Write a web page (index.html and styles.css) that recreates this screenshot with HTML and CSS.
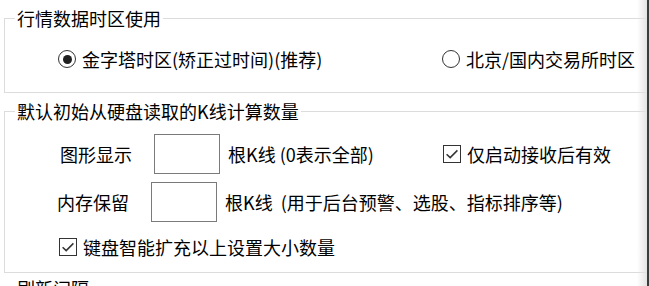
FILE: index.html
```html
<!DOCTYPE html>
<html lang="zh-CN">
<head>
<meta charset="utf-8">
<title>行情数据设置</title>
<link rel="stylesheet" href="styles.css">
</head>
<body>
<div class="window">
  <div class="content">
    <fieldset class="group group-tz">
      <legend>行情数据时区使用</legend>
      <div class="radio-row">
        <label class="opt"><span class="radio checked"><span class="dot"></span></span><span>金字塔时区(矫正过时间)(推荐)</span></label>
        <label class="opt"><span class="radio"></span><span>北京/国内交易所时区</span></label>
      </div>
    </fieldset>

    <fieldset class="group group-k">
      <legend>默认初始从硬盘读取的K线计算数量</legend>
      <div class="row row-a">
        <span class="lbl">图形显示</span>
        <span class="input"></span>
        <span class="hint hint-a">根K线 (0表示全部)</span>
        <label class="opt"><span class="check"><svg viewBox="0 0 18 18" width="18" height="18"><path d="M3.6 9.2 L7.2 12.6 L14.4 5.4" fill="none" stroke="#333" stroke-width="1.5"/></svg></span><span>仅启动接收后有效</span></label>
      </div>
      <div class="row row-b">
        <span class="lbl">内存保留</span>
        <span class="input"></span>
        <span class="hint hint-b">根K线  (用于后台预警、选股、指标排序等)</span>
      </div>
      <div class="row row-c">
        <label class="opt"><span class="check"><svg viewBox="0 0 18 18" width="18" height="18"><path d="M3.6 9.2 L7.2 12.6 L14.4 5.4" fill="none" stroke="#333" stroke-width="1.5"/></svg></span><span>键盘智能扩充以上设置大小数量</span></label>
      </div>
    </fieldset>

    <fieldset class="group group-refresh">
      <legend>刷新间隔</legend>
      <div class="spacer"></div>
    </fieldset>
  </div>
  <div class="edge"></div>
</div>
</body>
</html>
```

FILE: styles.css
```css
html, body {
  margin: 0;
  padding: 0;
  background: #ffffff;
}

body {
  font-family: "Noto Sans CJK SC", "Noto Sans", sans-serif;
  font-size: 18px;
  color: #000000;
}

.window {
  display: flex;
  width: 649px;
  height: 286px;
  overflow: hidden;
}

.content {
  position: relative;
  width: 647px;
  height: 286px;
  overflow: hidden;
  padding-top: 8px;
  box-sizing: border-box;
}

.content::after {
  content: "";
  position: absolute;
  top: 0;
  right: 0;
  width: 10px;
  height: 100%;
  background: linear-gradient(to right, rgba(238, 238, 238, 0), rgba(226, 226, 226, 0.95));
}

.edge {
  width: 2px;
  background: #3c3c3c;
}

.group {
  border: 1px solid #dcdcdc;
  margin: 0 -20px 0 4px;
  padding: 0;
  min-width: 0;
}

.group legend {
  margin-left: 10px;
  padding: 0 2px;
  line-height: 20px;
  font-size: 18px;
}

.group-tz {
  margin-bottom: 8px;
}

.group-k {
  margin-bottom: 5px;
}

.radio-row {
  display: grid;
  grid-template-columns: 384px auto;
  padding: 19px 0 21px 53px;
  line-height: 24px;
}

.opt {
  display: flex;
  align-items: center;
  gap: 6px;
  line-height: 24px;
  white-space: nowrap;
}

.radio {
  width: 18px;
  height: 18px;
  box-sizing: border-box;
  border: 1.5px solid #333333;
  border-radius: 50%;
  display: flex;
  align-items: center;
  justify-content: center;
  flex: none;
}

.radio .dot {
  width: 9px;
  height: 9px;
  border-radius: 50%;
  background: #1f1f1f;
}

.check {
  width: 18px;
  height: 18px;
  box-sizing: border-box;
  border: 1px solid #333333;
  display: flex;
  align-items: center;
  justify-content: center;
  flex: none;
}

.check svg {
  display: block;
  flex: none;
  margin: -1px;
}

.row {
  display: flex;
  align-items: center;
  line-height: 24px;
  white-space: nowrap;
}

.row-a {
  padding: 13px 0 0 55px;
}

.row-b {
  padding: 8px 0 0 52px;
}

.row-c {
  padding: 13px 0 13px 54px;
}

.row-a .opt {
  margin-left: -1px;
}

.lbl {
  width: 94px;
  flex: none;
}

.input {
  width: 66px;
  height: 40px;
  box-sizing: border-box;
  border: 1px solid #7a7a7a;
  background: #ffffff;
  flex: none;
}

.hint {
  margin-left: 8px;
  white-space: pre;
}

.hint-a {
  width: 216px;
  flex: none;
}

.spacer {
  height: 30px;
}
```
